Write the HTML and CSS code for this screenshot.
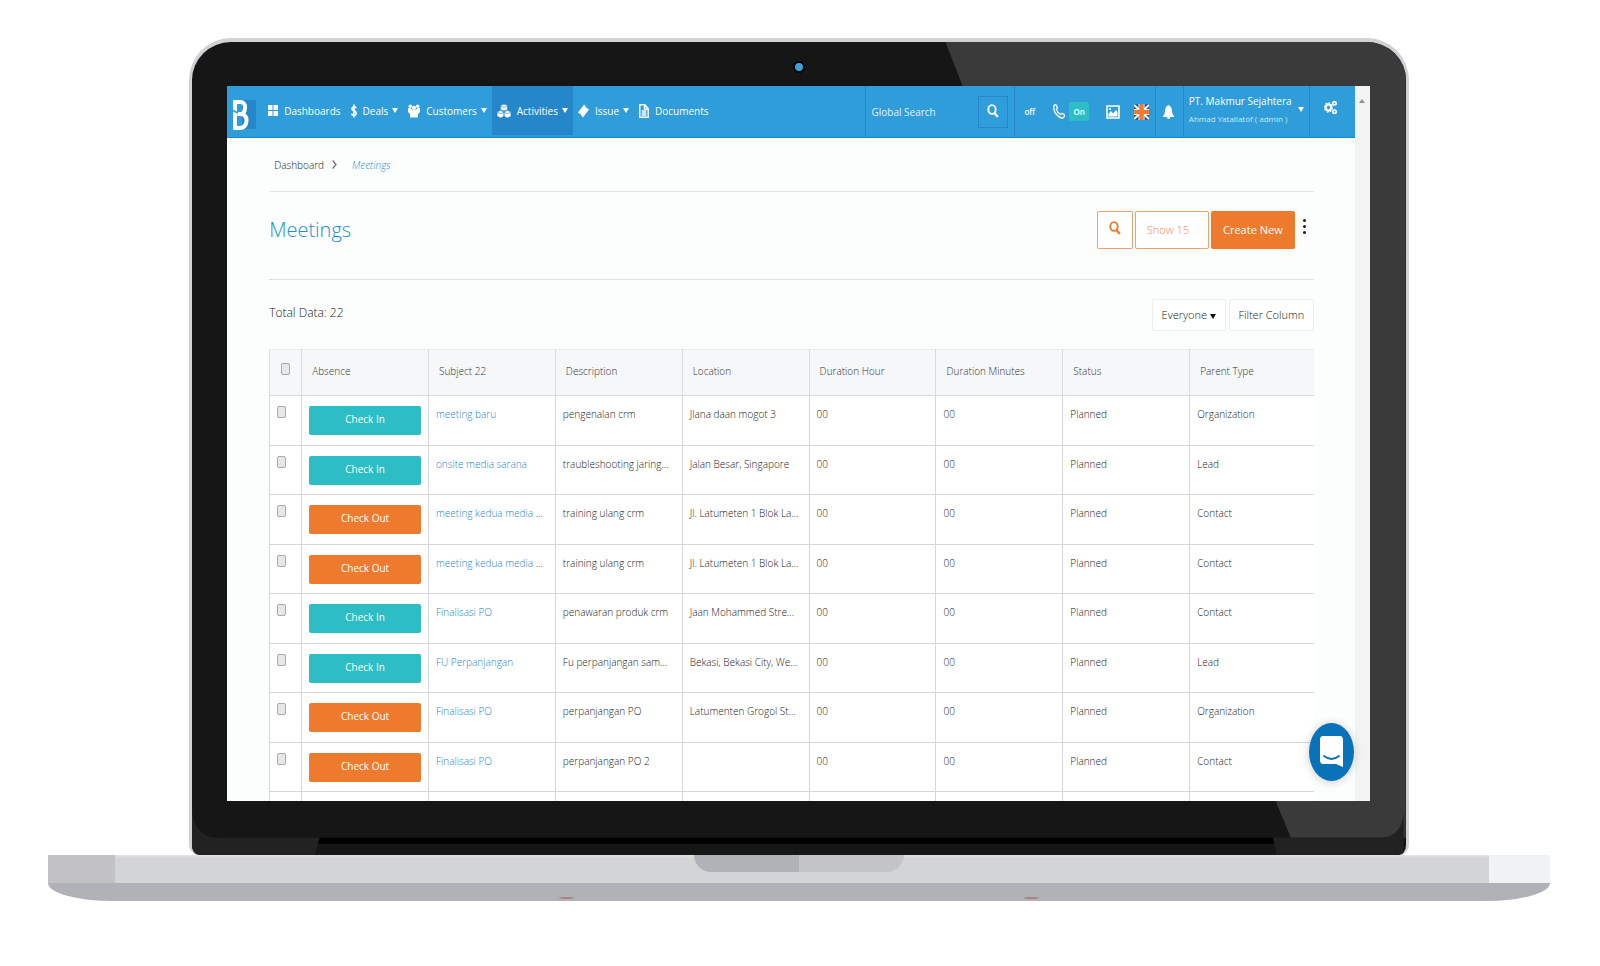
FILE: index.html
```html
<!DOCTYPE html>
<html lang="en">
<head>
<meta charset="utf-8">
<title>Meetings</title>
<link rel="stylesheet" href="styles.css">
</head>
<body>
<svg class="sprite" aria-hidden="true">
  <symbol id="i-search" viewBox="0 0 12 14"><ellipse cx="5" cy="5.5" rx="3.7" ry="4.4" fill="none" stroke="currentColor" stroke-width="1.9"/><path d="M7.5 9l3.300 4" stroke="currentColor" stroke-width="2.3"/></symbol>
  <symbol id="i-caret" viewBox="0 0 6 5"><path d="M0 0h6L3 5z" fill="currentColor"/></symbol>
</svg>
<div class="laptop">
  <div class="lid">
    <svg class="lid-art" viewBox="0 0 1216 813" preserveAspectRatio="none" aria-hidden="true">
      <path d="M755 0H1216V796H1101L1086 760 772 44z" fill="#3a3a3a"/>
      <path d="M0 770Q4 796 26 796H1190Q1212 796 1214 770V813H0z" fill="#222"/>
      <path d="M128 796H1083L1087 813H123z" fill="#161616"/>
      <path d="M128 796H1083L1084 802H126z" fill="#000"/>
    </svg>
    <span class="camera"></span>
    <div class="screen">
      <div class="app">
        <header class="navbar">
          <a class="brand" href="#" aria-label="Home">
            <svg width="24" height="30" viewBox="0 0 24 30"><path d="M10 0h14v29H10z" fill="#2686ca"/><path d="M1 2H8Q13.500 2 13 8T9 14Q15 15 14.500 21T9 28H3V2M3 14H9" fill="none" stroke="#fff" stroke-width="4"/><path d="M1 10.500l5 2.500" stroke="#2f9dd9" stroke-width="1.500"/></svg>
          </a>
          <nav class="menu">
            <a href="#"><svg width="10" height="11" viewBox="0 0 10 11"><path d="M0 0h4.500v5H0zM5.500 0H10v5H5.500zM0 6h4.500v5H0zM5.500 6H10v5H5.500z" fill="#fff"/></svg>Dashboards</a>
            <a href="#"><svg width="6" height="14" viewBox="0 0 6 14"><path d="M5.200 4.200Q4.800 2.700 3 2.700T.9 4.600Q.9 6.400 3 6.900T5.200 9.300Q5.200 11.300 3 11.300T.6 9.600M3 .5v13" fill="none" stroke="#fff" stroke-width="1.600"/></svg>Deals<svg class="caret"><use href="#i-caret"/></svg></a>
            <a href="#"><svg width="12" height="14" viewBox="0 0 12 14"><path d="M0 4h2.500L4 5.500h4L9.500 4H12v4l-2 2v3.500H2V10L0 8z" fill="#fff"/><circle cx="2.300" cy="2.300" r="1.700" fill="#fff"/><circle cx="9.700" cy="2.300" r="1.700" fill="#fff"/><circle cx="6" cy="3.800" r="2" fill="#fff"/></svg>Customers<svg class="caret"><use href="#i-caret"/></svg></a>
            <a class="active" href="#"><svg width="14" height="14" viewBox="0 0 14 14"><g fill="#fff" stroke="#2686ca" stroke-width=".6"><path d="M7 0l3.500 1.600v4L7 7.300 3.500 5.600v-4zM3.600 6.300L7 8v4.200L3.600 14 .1 12.200V8zM10.400 6.300L13.900 8v4.200L10.400 14 7 12.200V8z"/><path d="M4 2.200l3 1.400 3-1.400M.6 8.300l3.100 1.400L7 8.300M7 8.300l3.300 1.400 3.100-1.400" fill="none"/></g></svg>Activities<svg class="caret"><use href="#i-caret"/></svg></a>
            <a href="#"><svg width="11" height="14" viewBox="0 0 11 14"><path d="M0 8.500L6 .5l1.700 1.800q-.2 1.700 1.200 1.800L11 5.500 5 13.500l-1.700-1.800q.2-1.700-1.200-1.800z" fill="#fff"/></svg>Issue<svg class="caret"><use href="#i-caret"/></svg></a>
            <a href="#"><svg width="10" height="14" viewBox="0 0 10 14"><path d="M.8.800h5L9.200 4.500v8.700H.8zM5.500.8V5h3.700M2.700 7h4.600M2.700 9h4.600M2.700 11h4.600" fill="none" stroke="#fff" stroke-width="1.400"/></svg>Documents</a>
          </nav>
          <form class="global">
            <input type="text" placeholder="Global Search" aria-label="Global Search">
            <button type="button" aria-label="Search"><svg width="12" height="14"><use href="#i-search"/></svg></button>
          </form>
          <div class="tools">
            <span class="off">off</span>
            <svg width="12" height="15" viewBox="0 0 12 15"><path d="M1 1.500Q2.500 0 3.500 1.500L4.500 4 3.300 5.500Q4.500 8.500 7.500 10.500L9 9.300l2.300 1.500Q12 12.500 10 13.900 7 14.500 3.500 10.500T1 1.500z" fill="none" stroke="#fff" stroke-width="1.300"/></svg>
            <span class="on">On</span>
            <svg class="pic" width="14" height="14" viewBox="0 0 14 14"><path d="M1 1h12v12H1z" fill="none" stroke="#fff" stroke-width="1.600"/><path d="M2.500 11.500V9L5 6l2 2.500L10 5l1.500 2v4.500z" fill="#fff"/><circle cx="4" cy="4" r="1.100" fill="#fff"/></svg>
            <svg width="15" height="16" viewBox="0 0 15 16"><path d="M0 0h15v16H0z" fill="#25609f"/><path d="M0 1l15 14M15 1L0 15" stroke="#fff" stroke-width="2"/><path d="M7.500 0v16M0 8h15" stroke="#fff" stroke-width="6"/><path d="M7.500 0v16M0 8h15" stroke="#ee7b2d" stroke-width="4.500"/></svg>
          </div>
          <a class="bell" href="#" aria-label="Notifications"><svg width="11" height="14" viewBox="0 0 11 14"><path d="M5.500 0Q9 1.500 9 6q0 3.500 2 5v1H7.200Q7 14 5.500 14T3.800 12H0v-1q2-1.500 2-5 0-4.500 3.500-6z" fill="#fff"/></svg></a>
          <a class="account" href="#"><span><b>PT. Makmur Sejahtera</b><small>Ahmad Yatallatof ( admin )</small></span><svg class="caret"><use href="#i-caret"/></svg></a>
          <a class="gears" href="#" aria-label="Settings"><svg width="13" height="15" viewBox="0 0 13 15"><g fill="none" stroke="#fff"><ellipse cx="4.500" cy="7.500" rx="2.700" ry="3.200" stroke-width="2.200"/><ellipse cx="4.500" cy="7.500" rx="4" ry="4.600" stroke-width="1.200" stroke-dasharray="1.800 1.500"/><circle cx="10.500" cy="3.300" r="1.700" stroke-width="1.600"/><circle cx="10.500" cy="11.700" r="1.700" stroke-width="1.600"/></g></svg></a>
        </header>
        <main class="content">
          <div class="crumbs"><a href="#">Dashboard</a><svg width="5" height="9" viewBox="0 0 5 9"><path d="M.7.500L4 4.500.7 8.500" fill="none" stroke="#777" stroke-width="1.300"/></svg><em>Meetings</em></div>
          <div class="titlebar">
            <h1>Meetings</h1>
            <button class="find" type="button" aria-label="Search"><svg width="12" height="14"><use href="#i-search"/></svg></button>
            <select class="show" aria-label="Rows shown"><option>Show 15</option></select>
            <button class="create" type="button">Create New</button>
            <button class="more" type="button" aria-label="More"><i></i><i></i><i></i></button>
          </div>
          <div class="summary">
            <span class="total">Total Data: 22</span>
            <button class="everyone" type="button">Everyone<svg class="caret"><use href="#i-caret"/></svg></button>
            <button type="button">Filter Column</button>
          </div>
          <table>
            <thead><tr><th class="tick"><input type="checkbox" aria-label="Select all"></th><th>Absence</th><th>Subject 22</th><th>Description</th><th>Location</th><th>Duration Hour</th><th>Duration Minutes</th><th>Status</th><th class="last">Parent Type</th></tr></thead>
            <tbody>
              <tr><td><input type="checkbox" aria-label="Select"></td><td><button class="in" type="button">Check In</button></td><td><a href="#">meeting baru</a></td><td>pengenalan crm</td><td>Jlana daan mogot 3</td><td>00</td><td>00</td><td>Planned</td><td>Organization</td></tr>
              <tr><td><input type="checkbox" aria-label="Select"></td><td><button class="in" type="button">Check In</button></td><td><a href="#">onsite media sarana</a></td><td>traubleshooting jaring...</td><td>Jalan Besar, Singapore</td><td>00</td><td>00</td><td>Planned</td><td>Lead</td></tr>
              <tr><td><input type="checkbox" aria-label="Select"></td><td><button class="out" type="button">Check Out</button></td><td><a href="#">meeting kedua media</a> ...</td><td>training ulang crm</td><td>Jl. Latumeten 1 Blok La...</td><td>00</td><td>00</td><td>Planned</td><td>Contact</td></tr>
              <tr><td><input type="checkbox" aria-label="Select"></td><td><button class="out" type="button">Check Out</button></td><td><a href="#">meeting kedua media</a> ...</td><td>training ulang crm</td><td>Jl. Latumeten 1 Blok La...</td><td>00</td><td>00</td><td>Planned</td><td>Contact</td></tr>
              <tr><td><input type="checkbox" aria-label="Select"></td><td><button class="in" type="button">Check In</button></td><td><a href="#">Finalisasi PO</a></td><td>penawaran produk crm</td><td>Jaan Mohammed Stre...</td><td>00</td><td>00</td><td>Planned</td><td>Contact</td></tr>
              <tr><td><input type="checkbox" aria-label="Select"></td><td><button class="in" type="button">Check In</button></td><td><a href="#">FU Perpanjangan</a></td><td>Fu perpanjangan sam...</td><td>Bekasi, Bekasi City, We...</td><td>00</td><td>00</td><td>Planned</td><td>Lead</td></tr>
              <tr><td><input type="checkbox" aria-label="Select"></td><td><button class="out" type="button">Check Out</button></td><td><a href="#">Finalisasi PO</a></td><td>perpanjangan PO</td><td>Latumenten Grogol St...</td><td>00</td><td>00</td><td>Planned</td><td>Organization</td></tr>
              <tr><td><input type="checkbox" aria-label="Select"></td><td><button class="out" type="button">Check Out</button></td><td><a href="#">Finalisasi PO</a></td><td>perpanjangan PO 2</td><td></td><td>00</td><td>00</td><td>Planned</td><td>Contact</td></tr>
              <tr><td></td><td></td><td></td><td></td><td></td><td></td><td></td><td></td><td></td></tr>
            </tbody>
          </table>
        </main>
        <button class="chat" type="button" aria-label="Open chat"><svg width="23" height="32" viewBox="0 0 23 32"><path d="M3 0h17q3 0 3 4v27l-7-3H3q-3 0-3-4V4q0-4 3-4z" fill="#fff"/><path d="M4 20q7.500 6 15 0" fill="none" stroke="#0a72b9" stroke-width="1.800" stroke-linecap="round"/></svg></button>
      </div>
      <div class="scroll"><svg width="6" height="4" viewBox="0 0 6 4"><path d="M0 4L3 0l3 4z" fill="#998f8f"/></svg></div>
    </div>
  </div>
  <div class="deck"><span class="edge-left"></span><span class="edge-right"></span><span class="notch"></span></div>
  <div class="underside"><i></i><i></i></div>
</div>
</body>
</html>
```
FILE: styles.css
```css
* { box-sizing: border-box; }
body { margin: 0; padding-right: 2px; background: #fff; font-family: "Open Sans", sans-serif; font-size: 11px; font-weight: 300; color: #222; }
a { color: inherit; text-decoration: none; }
button, input, select { font: inherit; color: inherit; margin: 0; }
button { padding: 0; cursor: pointer; }
.sprite { position: absolute; width: 0; height: 0; }
.caret { width: 6px; height: 5px; flex: none; }

.laptop { width: 94%; margin: 0 auto; padding-top: 38px; }
.lid { position: relative; width: 81.2%; margin: 0 auto; padding: 44px 36px 54px 35px; background: #161616; border: 3px solid #d2d2d5; border-top-width: 4px; border-bottom: 0; border-radius: 42px 42px 10px 10px; overflow: hidden; }
.lid-art { position: absolute; inset: 0; width: 100%; height: 100%; }
.camera { position: absolute; top: 19px; left: 50%; width: 12px; height: 12px; margin-left: -6px; border: 2px solid #000; border-radius: 50%; background: #35a3dc; }
.screen { position: relative; display: flex; aspect-ratio: 1143 / 715; overflow: hidden; background: #fcfefd; }
.app { position: relative; flex: 1; min-width: 0; }
.scroll { width: 15px; padding-top: 5px; background: #f2f4f4; text-align: center; }

.navbar { display: flex; height: 52px; background: #2f9dd9; border-bottom: 1px solid #1688cf; color: #fff; font-size: 10px; font-weight: 400; white-space: nowrap; }
.brand { width: 36px; padding: 14px 0 0 5px; }
.menu { display: flex; }
.menu a { display: flex; align-items: center; gap: 6px; height: 49px; padding: 0 5px; }
.menu .caret { margin-left: -2px; }
.menu .active { background: #2686ca; }
.global { display: flex; align-items: center; width: 150px; margin-left: auto; padding: 0 6px 0 5px; border: solid #2686ca; border-width: 0 1px; }
.global input { flex: 1; min-width: 0; padding: 0; border: 0; background: none; outline: 0; }
.global input::placeholder { color: #e2f2fb; opacity: 1; }
.global button { width: 30px; height: 32px; padding-top: 2px; background: none; border: 1px solid #2686ca; color: #fff; }
.tools { display: flex; align-items: center; padding: 0 6px 0 9px; }
.off { width: 29px; font-size: 8px; font-weight: 600; }
.on { margin: 0 17px 0 4px; padding: 3px 4px; border-radius: 2px; background: #2cbec4; font-size: 8px; line-height: 13px; font-weight: 600; }
.pic { margin-right: 14px; }
.bell { display: flex; align-items: center; padding: 0 9px 0 7px; border: solid #2686ca; border-width: 0 1px; }
.account { display: flex; align-items: center; gap: 6px; width: 126px; padding: 0 5px 4px; border-right: 1px solid #2686ca; }
.account span { flex: 1; }
.account b, .account small { display: block; font-weight: 400; line-height: 17px; }
.account small { font-size: 8px; color: #cfe8f7; }
.gears { display: flex; align-items: center; justify-content: center; width: 45px; padding: 0 4px 8px 0; }

.content { padding: 0 41px 0 42px; }
.crumbs { display: flex; align-items: center; gap: 8px; height: 54px; padding-left: 5px; border-bottom: 1px solid #e4e6e6; font-size: 10px; }
.crumbs em { margin-left: 7px; color: #2f8fca; }
.titlebar { display: flex; align-items: center; gap: 2px; height: 88px; padding: 0 1px 12px 0; border-bottom: 1px solid #dfe1e1; }
h1 { flex: 1; margin: 0; font-size: 20px; line-height: 28px; font-weight: 300; color: #1d8fd0; }
.titlebar button, .titlebar select { height: 38px; border: 1px solid #f0a06a; border-radius: 2px; background: #fff; color: #ee7b2d; }
.titlebar .find { width: 36px; }
.titlebar .show { width: 74px; padding: 0 11px; appearance: none; color: #ee8a48; }
.titlebar .create { width: 84px; border-color: #ee7b2d; background: #ee7b2d; color: #fff; font-weight: 400; }
.titlebar .more { display: flex; flex-direction: column; align-items: center; justify-content: center; gap: 3px; width: 16px; padding-bottom: 6px; border: 0; background: none; }
.more i { width: 3px; height: 3px; border-radius: 50%; background: #222; }
.summary { display: flex; align-items: center; gap: 3px; height: 69px; }
.total { flex: 1; padding-bottom: 5px; font-size: 12px; }
.summary button { width: 85px; height: 32px; border: 1px solid #eceeee; border-radius: 2px; background: #fff; white-space: nowrap; }
.summary .everyone { width: 74px; }
.summary .caret { margin-left: 3px; color: #111; }

table { width: 100%; table-layout: fixed; border-collapse: collapse; background: #fff; font-size: 10px; white-space: nowrap; }
th { width: 12.15%; height: 46px; padding: 0 10px 3px; background: #f6f7f9; border: 1px solid #d9dddd; border-top-color: #e9ebeb; text-align: left; font-weight: 300; color: #333; }
th.tick { width: 32px; padding: 0 0 7px 11px; }
th.last { width: auto; }
td { height: 50px; padding: 10px 7px 0; border: 1px solid #d3d8d8; vertical-align: top; line-height: 16px; }
tbody tr:nth-child(even) td { height: 49px; }
th:last-child, td:last-child { border-right: 0; }
td a { color: #1f87c8; }
table input { appearance: none; display: block; width: 9px; height: 12px; border: 1px solid #aaa; border-radius: 2px; background: #e6e7e8; }
td button { display: block; width: 100%; height: 29px; padding-bottom: 3px; border: 0; border-radius: 2px; color: #fff; font-weight: 400; }
.in { background: #2cbec4; }
.out { background: #ee7b2d; }
.chat { position: absolute; right: 1px; bottom: 20px; width: 45px; height: 58px; border: 0; border-radius: 50%; background: #0a72b9; box-shadow: 0 1px 10px #0003; }
.chat svg { display: block; margin: 0 auto; }

.deck { position: relative; display: flex; justify-content: space-between; height: 28px; background: linear-gradient(#e2e2e5, #d3d4d6 4px); }
.edge-left { width: 67px; background: #c2c2c4; }
.edge-right { width: 61px; background: #f0f3f3; }
.notch { position: absolute; top: 0; left: 43%; width: 14%; height: 17px; border-radius: 0 0 18px 18px; background: linear-gradient(90deg, #b1b2b7 50%, #c4c3c5 50%); }
.underside { display: flex; justify-content: space-between; align-items: flex-end; height: 18px; padding: 0 34% 2px; background: #b1b2b7; border-radius: 0 0 65px 65px / 0 0 18px 18px; }
.underside i { width: 15px; height: 2px; border-radius: 50%; background: #a8827f; }
```
